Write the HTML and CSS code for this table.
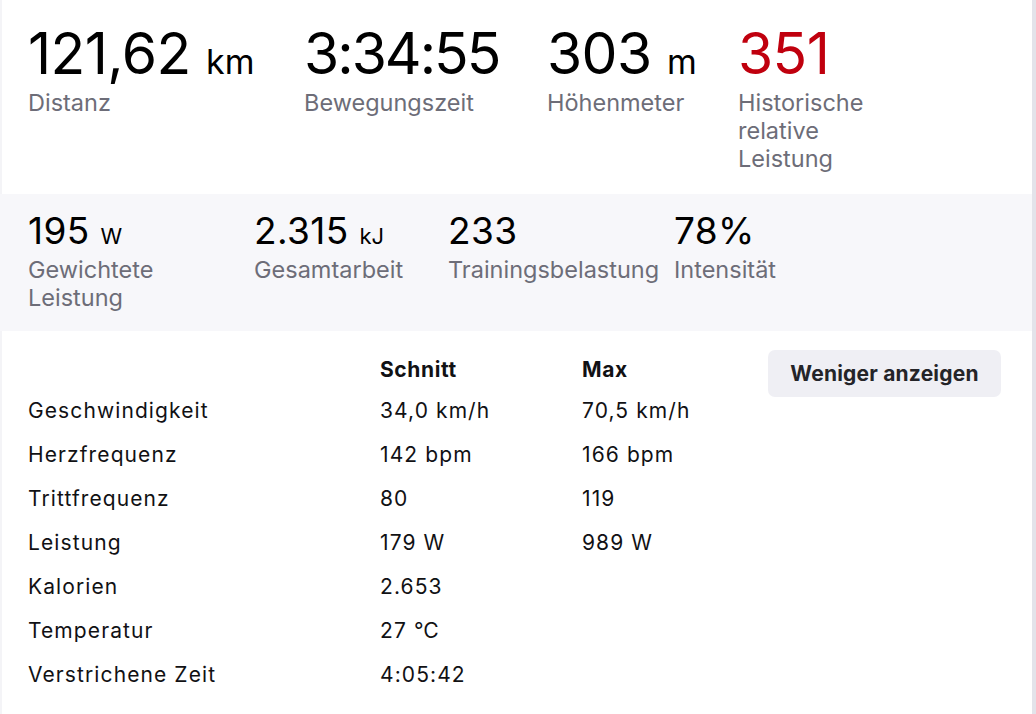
FILE: index.html
```html
<!DOCTYPE html>
<html lang="de">
<head>
<meta charset="utf-8">
<title>Aktivität</title>
<link rel="stylesheet" href="styles.css">
</head>
<body>
<div class="panel">
  <section class="primary">
    <div class="stat">
      <div class="value">121,62 <span class="unit">km</span></div>
      <div class="label">Distanz</div>
    </div>
    <div class="stat">
      <div class="value value--time">3:34:55</div>
      <div class="label">Bewegungszeit</div>
    </div>
    <div class="stat">
      <div class="value">303 <span class="unit">m</span></div>
      <div class="label">Höhenmeter</div>
    </div>
    <div class="stat stat--stack">
      <div class="value value--red">351</div>
      <div class="label">Historische relative Leistung</div>
    </div>
  </section>
  <section class="secondary">
    <div class="stat stat--stack">
      <div class="value">195 <span class="unit">W</span></div>
      <div class="label">Gewichtete Leistung</div>
    </div>
    <div class="stat">
      <div class="value">2.315 <span class="unit">kJ</span></div>
      <div class="label">Gesamtarbeit</div>
    </div>
    <div class="stat">
      <div class="value">233</div>
      <div class="label">Trainingsbelastung</div>
    </div>
    <div class="stat">
      <div class="value">78%</div>
      <div class="label">Intensität</div>
    </div>
  </section>
  <section class="details">
    <div class="table">
      <div class="cell head"></div><div class="cell head">Schnitt</div><div class="cell head">Max</div>
      <div class="cell">Geschwindigkeit</div><div class="cell">34,0 km/h</div><div class="cell">70,5 km/h</div>
      <div class="cell">Herzfrequenz</div><div class="cell">142 bpm</div><div class="cell">166 bpm</div>
      <div class="cell">Trittfrequenz</div><div class="cell">80</div><div class="cell">119</div>
      <div class="cell">Leistung</div><div class="cell">179 W</div><div class="cell">989 W</div>
      <div class="cell">Kalorien</div><div class="cell">2.653</div><div class="cell"></div>
      <div class="cell">Temperatur</div><div class="cell">27 ℃</div><div class="cell"></div>
      <div class="cell">Verstrichene Zeit</div><div class="cell">4:05:42</div><div class="cell"></div>
    </div>
    <button class="toggle" type="button">Weniger anzeigen</button>
  </section>
</div>
</body>
</html>
```
FILE: styles.css
```css
html, body {
  margin: 0;
  padding: 0;
  background: #ffffff;
}

body {
  font-family: Inter, "Noto Sans", "Liberation Sans", sans-serif;
  color: #1d1d22;
}

.panel {
  box-sizing: border-box;
  width: 1036px;
  height: 714px;
  background: #ffffff;
  border-left: 2px solid #f4f4f7;
  border-right: 4px solid #e3e3ea;
  display: flex;
  flex-direction: column;
}

.primary {
  display: grid;
  grid-template-columns: 276px 243px 191px 150px;
  padding: 25px 0 21px 26px;
  height: 194px;
  box-sizing: border-box;
}

.secondary {
  display: grid;
  grid-template-columns: 226px 194px 226px 200px;
  padding: 19px 0 19px 28px;
  margin-left: -2px;
  background: #f7f7fa;
  height: 137px;
  box-sizing: border-box;
}

.stat {
  display: flex;
  flex-direction: column;
}

.value {
  white-space: nowrap;
  color: #000000;
  font-size: 57px;
  line-height: 58px;
  letter-spacing: -0.6px;
}

.value--time {
  letter-spacing: -2px;
}

.value--red {
  color: #c0000e;
}

.unit {
  font-size: 34px;
  line-height: 1;
  letter-spacing: 0;
}

.label {
  margin-top: 6px;
  color: #6d6d78;
  font-size: 23.5px;
  line-height: 28px;
}

.stat--stack .label {
  width: min-content;
}

.secondary .value {
  font-size: 37px;
  line-height: 36px;
  letter-spacing: 0.4px;
}

.secondary .unit {
  font-size: 22px;
  letter-spacing: 0;
}

.secondary .label {
  margin-top: 7px;
}

.details {
  display: flex;
  align-items: flex-start;
  padding: 19px 31px 0 26px;
}

.table {
  display: grid;
  grid-template-columns: 352px 202px 186px;
  grid-template-rows: 38px;
  grid-auto-rows: 44px;
  align-items: center;
  font-size: 21px;
  letter-spacing: 1.1px;
  color: #111114;
}

.cell.head {
  font-weight: 700;
  letter-spacing: 0.6px;
}

.toggle {
  margin-left: auto;
  width: 233px;
  height: 47px;
  border: none;
  border-radius: 7px;
  background: #efeff4;
  color: #242428;
  font-family: inherit;
  font-size: 21px;
  font-weight: 700;
  letter-spacing: 0.2px;
  padding: 0;
  cursor: pointer;
}
```
